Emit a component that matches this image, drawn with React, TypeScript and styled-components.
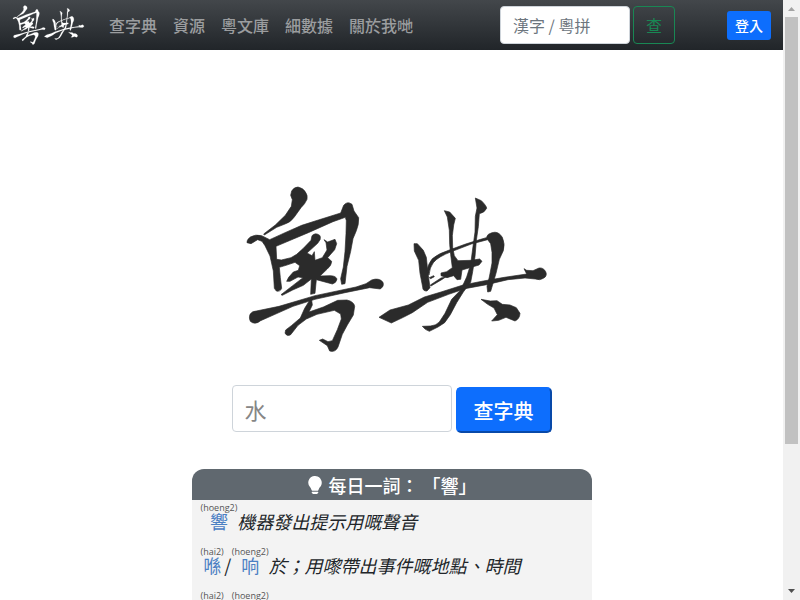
import React from "react";
import styled, { createGlobalStyle } from "styled-components";
import { BsLightbulbFill } from "react-icons/bs";

const GlobalStyle = createGlobalStyle`
  *, *::before, *::after { box-sizing: border-box; }
  body {
    margin: 0;
    background: #fff;
    color: #212529;
    font: 16px/24px "Noto Sans CJK HK", "Noto Sans CJK TC", sans-serif;
  }
  input, button { font-family: inherit; }
`;

const Window = styled.div`
  display: grid;
  grid-template-columns: minmax(0, 1fr) 17px;
  height: 100vh;
`;

const Page = styled.div`
  overflow: hidden;
`;

const Navbar = styled.header`
  display: flex;
  align-items: center;
  height: 50px;
  padding: 0 12px;
  background: linear-gradient(#43474b, #212529);
`;

const Brand = styled.a`
  display: flex;
  margin-right: 16px;
  color: #fff;
`;

const Nav = styled.nav`
  display: flex;
  flex: 1;
`;

const NavLink = styled.a`
  padding: 0 8px;
  color: #9b9d9f;
  font-weight: 500;
  text-decoration: none;
  white-space: nowrap;
`;

const NavForm = styled.form`
  display: flex;
  gap: 3px;
  margin-right: 52px;
`;

const TextInput = styled.input<{ $large?: boolean }>`
  width: ${(p) => (p.$large ? "220px" : "130px")};
  height: ${(p) => (p.$large ? "47px" : "38px")};
  padding: 0 12px;
  border: 1px solid #ced4da;
  border-radius: 4px;
  background: #fff;
  color: #212529;
  font-size: ${(p) => (p.$large ? "22px" : "16px")};
  &::placeholder {
    color: ${(p) => (p.$large ? "#868686" : "#6c757d")};
    opacity: 1;
  }
`;

const OutlineButton = styled.button`
  width: 42px;
  height: 38px;
  padding: 0;
  border: 1px solid #198754;
  border-radius: 4px;
  background: transparent;
  color: #198754;
  font-size: 16px;
`;

const LoginButton = styled.button`
  width: 44px;
  height: 29px;
  padding: 0;
  border: 0;
  border-radius: 3px;
  background: #0d6efd;
  color: #fff;
  font-size: 14px;
  font-weight: 500;
`;

const Main = styled.main`
  display: flex;
  flex-direction: column;
  align-items: center;
  padding-top: 135px;
`;

const Hero = styled.h1`
  display: flex;
  margin: 0;
  padding-left: 10px;
  color: #2b2b2b;
`;

const SearchForm = styled.form`
  display: flex;
  align-items: flex-end;
  gap: 4px;
  margin-top: 28px;
`;

const SearchButton = styled.button`
  width: 96px;
  height: 46px;
  margin-bottom: -1px;
  padding: 0;
  border: 2px outset #0d6efd;
  border-radius: 5px;
  background: #0d6efd;
  color: #fff;
  font-size: 20px;
  font-weight: 500;
`;

const Card = styled.section`
  width: 100%;
  max-width: 400px;
  margin-top: 37px;
  overflow: hidden;
  border-radius: 12px 12px 0 0;
  background: #f3f3f3;
`;

const CardTitle = styled.h2`
  display: flex;
  align-items: center;
  justify-content: center;
  gap: 4px;
  height: 31px;
  margin: 0;
  background: #60686f;
  color: #fff;
  font-size: 18px;
  font-weight: 500;
`;

const Entries = styled.ul`
  margin: 0;
  padding: 0 9px;
  list-style: none;
`;

const Entry = styled.li`
  display: flex;
  align-items: flex-end;
  height: 44px;
  padding-bottom: 13px;
  font-size: 18px;
  line-height: 20px;
  white-space: nowrap;
`;

const Word = styled.a`
  display: flex;
  flex-direction: column;
  align-items: center;
  color: #4b80c3;
  text-decoration: none;
`;

const Reading = styled.span`
  height: 8px;
  color: #555;
  font-family: "Open Sans", sans-serif;
  font-size: 9px;
  line-height: 10px;
`;

const Slash = styled.span`
  width: 8px;
  text-align: center;
`;

const Meaning = styled.em``;

const Scrollbar = styled.div`
  display: flex;
  flex-direction: column;
  align-items: center;
  background: #f1f1f1;
`;

const Thumb = styled.div`
  width: 13px;
  height: 427px;
  background: #c1c1c1;
`;

const Arrow = styled.svg`
  flex: none;
  width: 17px;
  height: 17px;
`;

const Track = styled.div`
  flex: 1;
`;

const YUE = [
  "M167 75L170 62Q177 50 189 50Q205 54 210 63Q219 75 216 87Q210 101 198 112L178 140Q167 156 150 161L125 171L88 194L86 191L121 164L151 135L169 108L172 88Z",
  "M36 217Q34 208 46 200Q62 191 80 196L104 208L150 187L200 165L250 149L317 128L326 105Q337 91 351 102L357 122L371 142Q372 163 364 181L354 205L347 243L336 288L330 340L320 342L317 325L325 290L330 244L333 190L334 151L331 141L294 154L220 187L123 228L125 267L139 269L168 262L185 252L205 234L228 210L231 196Q242 185 255 196Q260 207 248 219L216 248L231 256L238 244L240 270L262 262L276 239L273 217L267 208L278 215L300 207L305 220L299 238L278 262L290 273Q290 286 276 297L255 317L285 316Q302 316 306 326Q304 338 292 341L244 328L240 369L227 372L229 326L205 345L173 359L142 375L138 373L173 346L204 322L189 320L165 333L155 333L161 321L175 305L190 300L194 286L180 276L153 285L133 291L136 322L140 354Q136 365 124 362L118 354L115 302L105 257L90 226L81 213L68 208L48 220Z",
  "M45 432Q51 422 64 422L132 408L240 376L363 350L393 340L410 329Q432 321 444 336Q449 348 436 356L404 352L330 367L240 387L174 408L120 432L77 451Q60 465 46 453Q41 443 45 432Z",
  "M229 382L232 404L222 425L265 410L308 390L336 389Q357 394 359 408L355 434L337 464L322 492L309 530Q301 547 284 542L277 526L253 510L263 506L279 514L292 511L307 478L319 446L317 431L298 420L246 432L214 446L189 465L167 493Q156 500 150 489L152 479L169 466L196 443L209 414Z",
];

const DIN = [
  "M132 190L142 190L160 210L169 231L173 269L180 322L171 332Q158 333 158 320L150 279L146 240L133 212Z",
  "M171 272Q174 250 187 235Q204 220 238 209L287 191L332 177L349 172Q352 160 366 157Q385 151 397 171Q406 191 400 211L388 237L378 279L362 333L353 335L351 318L358 290L366 248L366 216L362 190L353 178L304 191L247 213Q204 229 190 247Q179 261 177 284Z",
  "M223 91L239 95L256 114L251 134L247 166L248 201L253 226L264 241L303 240L329 236L336 243L327 254L276 269L272 297L261 298L251 286L231 292L213 286L213 278L230 274L247 262L242 223L239 192L238 150L232 110Z",
  "M316 53L334 61Q350 77 350 84Q343 98 328 100L325 139L319 180L315 229L308 274L302 306L280 335L260 367L241 403L224 427L204 440L178 453Q165 449 157 438L181 437Q198 436 208 425L225 399L245 357L272 329L290 290L302 252L309 198L315 155L316 108L321 83Z",
  "M27 411L60 389L115 374L163 350L213 335L279 314L340 302L403 291L470 281L462 265L470 270L489 271L507 263Q520 261 527 274Q533 287 520 294Q510 301 496 296L465 293L414 298L350 313L285 325L236 342L173 366L127 397L100 411L64 428Z",
  "M333 357L361 362L381 361L397 372L420 374L439 382L450 399Q449 416 435 422L408 411L386 420L365 422L382 403L372 383L353 372Z",
  "M178 292L191 286L193 289L182 295ZM181 314L213 293L227 290L215 298L183 317Z",
];

function Calligraphy({ width }: { width: number }) {
  return (
    <svg
      width={width}
      height={Math.round((width * 172) / 308)}
      viewBox="24 44 924 516"
      fill="currentColor"
      stroke="currentColor"
      strokeWidth={2}
      strokeLinejoin="round"
      role="img"
      aria-label="粵典"
    >
      {YUE.map((d) => (
        <path key={d} d={d} />
      ))}
      <g transform="translate(405 30)">
        {DIN.map((d) => (
          <path key={d} d={d} />
        ))}
      </g>
    </svg>
  );
}

const links = ["查字典", "資源", "粵文庫", "細數據", "關於我哋"];

const entries = [
  { words: [["響", "hoeng2"]], meaning: "機器發出提示用嘅聲音" },
  { words: [["喺", "hai2"], ["响", "hoeng2"]], meaning: "於；用嚟帶出事件嘅地點、時間" },
  { words: [["喺", "hai2"], ["响", "hoeng2"]], meaning: "" },
];

export default function App() {
  return (
    <>
      <GlobalStyle />
      <Window lang="zh-HK">
        <Page>
          <Navbar>
            <Brand href="#">
              <Calligraphy width={73} />
            </Brand>
            <Nav>
              {links.map((label) => (
                <NavLink href="#" key={label}>
                  {label}
                </NavLink>
              ))}
            </Nav>
            <NavForm>
              <TextInput aria-label="漢字 / 粵拼" placeholder="漢字 / 粵拼" />
              <OutlineButton type="button">查</OutlineButton>
            </NavForm>
            <LoginButton type="button">登入</LoginButton>
          </Navbar>
          <Main>
            <Hero>
              <Calligraphy width={308} />
            </Hero>
            <SearchForm>
              <TextInput $large aria-label="查字典" placeholder="水" />
              <SearchButton type="button">查字典</SearchButton>
            </SearchForm>
            <Card>
              <CardTitle>
                <BsLightbulbFill size={18} />
                <span>每日一詞： 「響」</span>
              </CardTitle>
              <Entries>
                {entries.map((entry, i) => (
                  <Entry key={i}>
                    {entry.words.map(([word, reading], j) => (
                      <React.Fragment key={word}>
                        {j > 0 && <Slash>/</Slash>}
                        <Word href="#">
                          <Reading>({reading})</Reading>
                          {word}
                        </Word>
                      </React.Fragment>
                    ))}
                    <Meaning>{entry.meaning}</Meaning>
                  </Entry>
                ))}
              </Entries>
            </Card>
          </Main>
        </Page>
        <Scrollbar aria-hidden="true">
          <Arrow viewBox="0 0 17 17">
            <path d="M5 11h7L8.5 7z" fill="#a3a3a3" />
          </Arrow>
          <Thumb />
          <Track />
          <Arrow viewBox="0 0 17 17">
            <path d="M5 6h7L8.5 10z" fill="#505050" />
          </Arrow>
        </Scrollbar>
      </Window>
    </>
  );
}
